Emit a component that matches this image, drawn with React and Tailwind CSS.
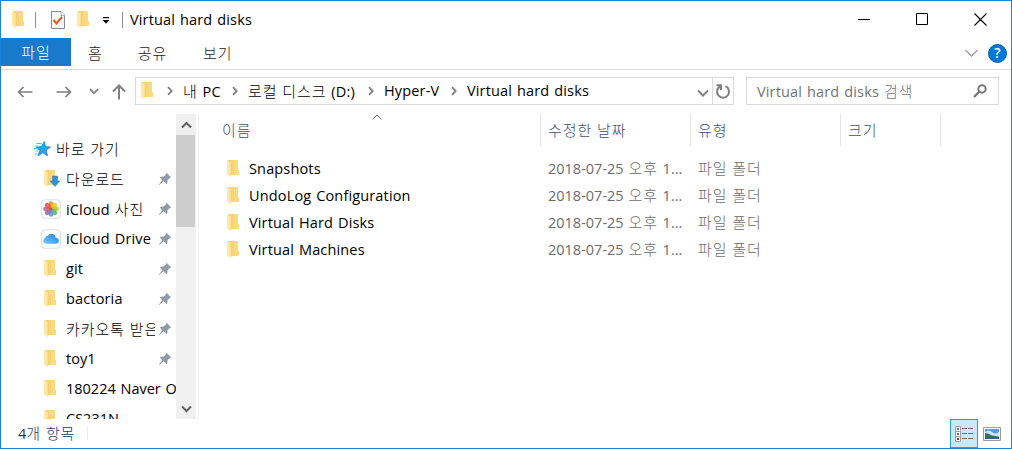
import React from "react";

const places = [
  { name: "다운로드", icon: "download", pinned: true },
  { name: "iCloud 사진", icon: "photos", pinned: true },
  { name: "iCloud Drive", icon: "cloud", pinned: true },
  { name: "git", icon: "folder", pinned: true },
  { name: "bactoria", icon: "folder", pinned: true },
  { name: "카카오톡 받은", icon: "folder", pinned: true },
  { name: "toy1", icon: "folder", pinned: true },
  { name: "180224 Naver O", icon: "folder", pinned: false },
  { name: "CS231N", icon: "folder", pinned: false },
];

const files = ["Snapshots", "UndoLog Configuration", "Virtual Hard Disks", "Virtual Machines"];

const petals = ["#f58a1f", "#f5c81b", "#b5cc32", "#5eb56c", "#5c9ed8", "#8b74b8", "#c266a0", "#ef5546"];

// Hangul and Latin runs each get their own face and tracking.
function T({ children, className = "" }) {
  const parts = children.match(/[\uac00-\ud7a3]+|[^\uac00-\ud7a3]+/g);
  return (
    <span className={`whitespace-pre ${className}`}>
      {parts.map((p, i) =>
        /[\uac00-\ud7a3]/.test(p) ? (
          <span key={i} className="font-['Noto_Sans_CJK_KR',sans-serif] font-light text-[15px] tracking-[0.9px]">{p}</span>
        ) : (
          <span
            key={i}
            className={`font-['Open_Sans','Noto_Sans',sans-serif] text-[14.5px] [word-spacing:1px] ${/\d/.test(p) ? "" : "tracking-[0.15px]"}`}
          >
            {p}
          </span>
        )
      )}
    </span>
  );
}

function Folder({ download = false, className = "" }) {
  return (
    <svg width="18" height="18" viewBox="0 0 18 18" className={`shrink-0 ${className}`}>
      <path d="M3 0h10v10h1v5H3z" fill="#f6d477" />
      <path d="M9 0h4v10h1v5H9z" fill="#fadb7c" />
      <path d="M2 .2 6 2.500v14.500l-4-2.300z" fill="#ffe8a5" />
      <path d="M6 2.500v13" stroke="#edcb70" strokeWidth=".7" />
      {download && <path d="M10.500 6h5v5H18l-5 5.500-5-5.500h2.500z" fill="#348fdc" stroke="#267ac0" strokeWidth=".5" />}
    </svg>
  );
}

function Tile({ children }) {
  return (
    <svg width="20" height="20" viewBox="0 0 20 20" className="shrink-0">
      <rect x=".75" y=".75" width="18.5" height="18.5" rx="3.5" fill="#fff" stroke="#e0e0e0" strokeWidth="1.2" />
      {children}
    </svg>
  );
}

function PlaceIcon({ kind }) {
  if (kind === "photos")
    return (
      <Tile>
        {petals.map((c, i) => (
          <ellipse key={c} cx="10" cy="5.7" rx="2.4" ry="3.5" fill={c} fillOpacity=".9" transform={`rotate(${i * 45} 10 10)`} />
        ))}
        <circle cx="10" cy="10" r="1.4" fill="#b9583e" />
      </Tile>
    );
  if (kind === "cloud")
    return (
      <Tile>
        <defs>
          <linearGradient id="cloud" x1="0" y1="1" x2="1" y2="0">
            <stop offset="0" stopColor="#75cbfb" />
            <stop offset="1" stopColor="#207ee9" />
          </linearGradient>
        </defs>
        <path d="M5 14.800a3 3 0 0 1-.8-5.800A2.500 2.500 0 0 1 7 6.800a4.100 4.100 0 0 1 7.600 2 3 3 0 0 1 .4 6z" fill="url(#cloud)" />
      </Tile>
    );
  return <Folder download={kind === "download"} />;
}

function Pin() {
  return (
    <svg width="14" height="14" viewBox="0 0 14 14" className="shrink-0">
      <path d="M8.500.8 13.200 5.500 11.800 6 9.500 8.300 9.300 11.500 8.300 12 5.500 9.200 1.200 13 .8 12.700 4.300 8.200 2 5.700 2.600 4.800 5.800 4.600 8 2.300z" fill="#919ba5" />
    </svg>
  );
}

function Chevron({ d, w = 12, h = 12, stroke = "#808080", sw = 2 }) {
  return (
    <svg width={w} height={h} viewBox={`0 0 ${w} ${h}`} className="shrink-0" fill="none" stroke={stroke} strokeWidth={sw}>
      <path d={d} />
    </svg>
  );
}

function Sep() {
  return (
    <span className="flex w-[26px] shrink-0 justify-center">
      <Chevron w={6} h={10} sw={1.8} d="M1 1.200 4.700 5 1 8.800" />
    </span>
  );
}

function TitleBar() {
  return (
    <div className="flex h-[37px] shrink-0 items-center">
      <Folder className="ml-[9px]" />
      <span className="ml-[7px] h-4 w-px bg-[#8d8d8d]" />
      <svg width="16" height="20" viewBox="0 0 16 20" className="ml-[14px] shrink-0">
        <path d="M1.500 1.500h9.500l3.500 3.500v13.500h-13z" fill="#f7f8f8" stroke="#858b90" />
        <path d="M11 1.500v4h4" fill="#fff" stroke="#a5a9ad" />
        <path d="m3.500 10 3 3.500L12 6.800" fill="none" stroke="#e85a1b" strokeWidth="2" />
      </svg>
      <Folder className="ml-[9px]" />
      <svg width="8" height="8" viewBox="0 0 8 8" className="ml-[9px] mt-[3px] shrink-0">
        <path d="M1 0h6v1.300H1zM.5 3h7L4 6.700z" fill="#111" />
      </svg>
      <span className="ml-[12px] h-4 w-px bg-[#8d8d8d]" />
      <T className="ml-[7px] mt-px">Virtual hard disks</T>
      <div className="ml-auto flex items-center gap-[45px] pr-[24px] text-black">
        <svg width="13" height="13" viewBox="0 0 13 13"><path d="M0 6.500h12" stroke="currentColor" /></svg>
        <svg width="13" height="13" viewBox="0 0 13 13"><path d="M.5.5h11v11H.5z" fill="none" stroke="currentColor" /></svg>
        <svg width="13" height="13" viewBox="0 0 13 13"><path d="m.5.5 12 12M12.500.5l-12 12" stroke="currentColor" strokeWidth="1.1" /></svg>
      </div>
    </div>
  );
}

function Ribbon() {
  return (
    <div className="flex h-8 shrink-0 border-b border-[#dadbdc] text-[#222]">
      <div className="flex h-7 w-[70px] items-center justify-center bg-[#1979ca] text-white"><T>파일</T></div>
      <div className="flex h-[30px] items-center">
        <T className="ml-[17px]">홈</T>
        <T className="ml-[35px]">공유</T>
        <T className="ml-[36px]">보기</T>
      </div>
      <div className="ml-auto flex h-[30px] items-center gap-[10px] pr-[4px]">
        <Chevron w={13} h={8} stroke="#a0a0a0" sw={1.3} d="m.5 1 6 6 6-6" />
        <span className="flex size-[19px] items-center justify-center rounded-full border border-[#075fae] bg-[#0078d7] font-['Open_Sans',sans-serif] text-[14px] font-semibold leading-none text-white">?</span>
      </div>
    </div>
  );
}

function AddressRow() {
  return (
    <div className="flex h-[44px] shrink-0 items-start pt-[7px]">
      <div className="flex h-7 w-[134px] shrink-0 items-center pl-4 pt-px">
        <Chevron w={16} h={12} sw={1.7} d="M15.500 6H1.500M6.500 1 1.500 6l5 5" />
        <span className="w-[23px]" />
        <Chevron w={16} h={12} sw={1.7} d="M.5 6h14M9.500 1l5 5-5 5" />
        <span className="w-[17px]" />
        <Chevron w={10} h={7} sw={1.8} d="m1 1.200 4 4 4-4" />
        <span className="w-[13px]" />
        <Chevron w={14} h={16} sw={2} d="M7 15.500V1.500M1 7.500l6-6 6 6" />
      </div>
      <div className="flex h-7 w-[599px] shrink-0 items-center border border-[#d9d9d9]">
        <Folder className="ml-[3px]" />
        <Sep />
        <T className="w-[39px]">내 PC</T>
        <Sep />
        <T className="w-[110px]">로컬 디스크 (D:)</T>
        <Sep />
        <T className="w-[57px]">Hyper-V</T>
        <Sep />
        <T>Virtual hard disks</T>
        <span className="ml-auto mr-[3px] mt-[3px] flex"><Chevron w={12} h={8} d="m1 1.500 5 5 5-5" /></span>
        <span className="flex h-full w-[21px] items-center justify-center border-l border-[#d9d9d9]">
          <svg width="16" height="16" viewBox="0 0 16 16" fill="none" stroke="#808080" strokeWidth="2">
            <path d="M10.500 3.200a6 6 0 1 1-5.300.2M6 7V2.200H1.500" />
          </svg>
        </span>
      </div>
      <div className="ml-3 flex h-7 w-[253px] items-center justify-between border border-[#d9d9d9] pl-[10px] pr-[11px] text-[#747474]">
        <T>Virtual hard disks 검색</T>
        <svg width="14" height="14" viewBox="0 0 14 14" fill="none" stroke="#777" strokeWidth="2">
          <circle cx="9" cy="5" r="3.700" />
          <path d="M6.200 7.800 1 13" strokeWidth="2.300" />
        </svg>
      </div>
    </div>
  );
}

function Sidebar() {
  return (
    <div className="flex w-[198px] shrink-0 border-r border-[#f3f3f3]">
      <div className="w-[175px] shrink-0 overflow-hidden pt-5">
        <div className="flex h-[30px] items-center pl-[32px]">
          <svg width="18" height="16" viewBox="0 0 18 16" className="shrink-0">
            <path d="M11.300.5 12.500 5.500 17.500 6 13.300 9.200 14.500 14.800 9.700 11.800 4.900 15 6.700 9.600 3.200 6 8.400 5.600z" fill="#29a0ec" stroke="#147fc6" strokeWidth=".7" />
            <path d="M3.500 2.500h5M2 5h3M1 7.500h3M2.500 10h2.500M1.500 13h3" stroke="#58b9ef" />
          </svg>
          <T className="ml-[5px]">바로 가기</T>
        </div>
        {places.map((p) => (
          <div key={p.name} className="flex h-[30px] items-center pl-[39px]">
            <span className="flex w-[22px] shrink-0 justify-center"><PlaceIcon kind={p.icon} /></span>
            <span className={p.pinned ? "ml-[4px] w-[89px] shrink-0 overflow-hidden" : "ml-[4px] shrink-0"}><T>{p.name}</T></span>
            {p.pinned && <span className="ml-[3px] flex"><Pin /></span>}
          </div>
        ))}
      </div>
      <div className="flex w-5 shrink-0 flex-col items-center bg-[#f0f0f0]">
        <span className="flex h-[21px] shrink-0 items-center"><Chevron w={11} h={8} stroke="#606060" d="m1 6.500 4.500-4.500 4.500 4.500" /></span>
        <span className="h-[92px] w-[19px] shrink-0 self-start bg-[#cdcdcd]" />
        <span className="mt-auto flex h-[21px] items-center"><Chevron w={11} h={8} stroke="#606060" d="m1 1.500 4.500 4.500 4.500-4.500" /></span>
      </div>
    </div>
  );
}

function FileList() {
  const head = "flex h-8 items-center border-r border-[#e5e5e5] text-[#3c5070]";
  return (
    <div className="flex-1">
      <div className="flex h-[41px]">
        <div className={`relative w-[342px] pl-[23px] ${head}`}>
          <T>이름</T>
          <span className="absolute left-[173px] top-0 flex"><Chevron w={10} h={6} sw={1} stroke="#777" d="m.5 5.500 4.500-4.500 4.500 4.500" /></span>
        </div>
        <div className={`w-[150px] pl-[7px] ${head}`}><T>수정한 날짜</T></div>
        <div className={`w-[150px] pl-[7px] ${head}`}><T>유형</T></div>
        <div className={`w-[100px] pl-[7px] ${head}`}><T>크기</T></div>
      </div>
      {files.map((f) => (
        <div key={f} className="flex h-[27px] items-center text-[#6d6d6d]">
          <Folder className="ml-[26px]" />
          <div className="ml-[6px] w-[299px] text-black"><T>{f}</T></div>
          <div className="w-[150px]"><T>2018-07-25 오후 1...</T></div>
          <T>파일 폴더</T>
        </div>
      ))}
    </div>
  );
}

function StatusBar() {
  return (
    <div className="flex h-[29px] shrink-0 items-center pl-[17px] text-[#1e395b]">
      <T>4개 항목</T>
      <span className="ml-3 h-[13px] w-px bg-[#ededed]" />
      <span className="ml-auto flex h-[29px] w-7 items-center justify-center border border-[#26a0da] bg-[#cce8f6]">
        <svg width="18" height="16" viewBox="0 0 18 16">
          {[["#3e78ad", 0], ["#6d7840", 5], ["#ba2424", 10]].map(([c, y]) => (
            <g key={y}>
              <path d={`M.5 ${y + 0.5}h5v5h-5z`} fill="#fff" stroke="#a0a0a0" />
              <path d={`M2 ${y + 2}h2v2H2z`} fill={c} />
              <path d={`M7 ${y + 2.5}h5M13 ${y + 2.5}h5`} stroke="#6d6d6d" />
            </g>
          ))}
        </svg>
      </span>
      <svg width="18" height="14" viewBox="0 0 18 14" className="ml-[5px] mr-[10px]">
        <path d="M.5.5h17v13H.5z" fill="#fff" stroke="#999" />
        <path d="M2 2h14v10H2z" fill="#5a9add" />
        <path d="M2 5q4-3 7 0t7 0v5H2z" fill="#d1e7f6" />
        <path d="M2 6q4 0 7 2.500l7 1V11H2z" fill="#35735d" />
        <path d="M2 10.500h14V12H2z" fill="#2c619c" />
      </svg>
    </div>
  );
}

export default function App() {
  return (
    <div className="flex h-[449px] w-[1012px] flex-col overflow-hidden border border-[#1883d7] bg-white text-sm leading-5 text-black">
      <TitleBar />
      <Ribbon />
      <AddressRow />
      <div className="flex h-[305px] shrink-0 overflow-hidden">
        <Sidebar />
        <FileList />
      </div>
      <StatusBar />
    </div>
  );
}
